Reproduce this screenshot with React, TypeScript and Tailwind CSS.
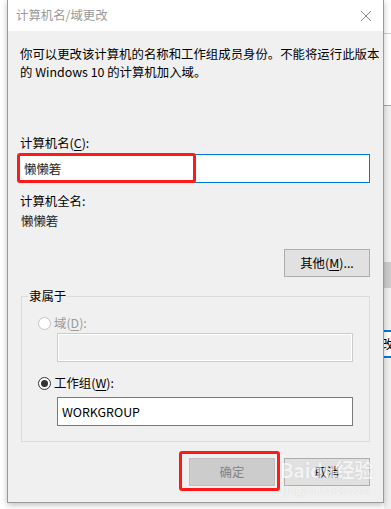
import React from "react";

const font = { fontFamily: '"Noto Sans CJK SC", "Noto Sans", sans-serif' };

function U({ children }: { children: React.ReactNode }) {
  return <span className="underline underline-offset-2 decoration-1">{children}</span>;
}

function Radio({ checked, disabled }: { checked?: boolean; disabled?: boolean }) {
  return (
    <span
      className={
        "flex items-center justify-center w-[13px] h-[13px] rounded-full border bg-white " +
        (disabled ? "border-[#c4c4c4]" : "border-[#333333]")
      }
    >
      {checked && <span className="w-[7px] h-[7px] rounded-full bg-[#333333]" />}
    </span>
  );
}

function Button({
  children,
  disabled,
  className = "",
}: {
  children: React.ReactNode;
  disabled?: boolean;
  className?: string;
}) {
  return (
    <div
      className={
        "flex items-center justify-center w-[86px] h-[28px] border text-[12.4px] " +
        (disabled
          ? "bg-[#cccccc] border-[#bfbfbf] text-[#838383]"
          : "bg-[#e1e1e1] border-[#adadad] text-black") +
        " " +
        className
      }
    >
      {children}
    </div>
  );
}

export default function App() {
  return (
    <div className="flex w-[391px] h-[509px] bg-white overflow-hidden" style={font}>
      <div className="w-[7px] shrink-0" />

      {/* dialog */}
      <div className="w-[377px] h-[503px] shrink-0 flex flex-col border-x border-b border-[#9a9a9a] bg-[#f0f0f0] shadow-[0_2px_6px_rgba(0,0,0,0.25)] relative">
        {/* title bar */}
        <div className="h-[31px] bg-white flex items-center justify-between pl-[8px] pr-[8px]">
          <span className="text-[12.4px] text-[#9a9a9a] leading-none">计算机名/域更改</span>
          <svg width="12" height="12" viewBox="0 0 12 12" className="mr-[3px]">
            <path d="M1 1 L11 11 M11 1 L1 11" stroke="#8a8a8a" strokeWidth="1" />
          </svg>
        </div>

        {/* body */}
        <div className="flex flex-col pl-[11px] pr-[13px] text-[12.4px] leading-[18px] text-black">
          <div className="mt-[14px] ml-[1px]">
            <div className="whitespace-nowrap">你可以更改该计算机的名称和工作组成员身份。不能将运行此版本</div>
            <div className="whitespace-nowrap">的 Windows 10 的计算机加入域。</div>
          </div>

          <div className="mt-[53px] ml-[1px]">
            计算机名(<U>C</U>):
          </div>
          <div className="relative mt-[2px] h-[29px] border border-[#0078d7] bg-white flex items-center pl-[4px]">
            <span className="text-[#222]">懒懒箬</span>
            <div className="absolute left-[-3px] top-[-2px] w-[179px] h-[30px] border-[3px] border-[#ff1a1a] rounded-[3px]" />
          </div>

          <div className="mt-[9px] ml-[1px]">计算机全名:</div>
          <div className="mt-[2px] ml-[2px] text-[#222]">懒懒箬</div>

          <div className="flex justify-end mt-[19px]">
            <Button>
              其他(<U>M</U>)...
            </Button>
          </div>

          {/* group box */}
          <div className="relative mt-[19px] ml-[2px] h-[146px] border border-[#dcdcdc] flex flex-col pt-[17px]">
            <span className="absolute top-[-10px] left-[6px] px-[1px] bg-[#f0f0f0]">隶属于</span>

            <div className="flex items-center gap-[3px] ml-[16px] text-[#9a9a9a]">
              <Radio disabled />
              <span>
                域(<U>D</U>):
              </span>
            </div>
            <div className="mt-[1px] ml-[35px] w-[296px] h-[29px] border border-[#cccccc] shadow-[inset_0_0_0_1px_#ffffff]" />

            <div className="flex items-center gap-[3px] ml-[16px] mt-[12px]">
              <Radio checked />
              <span>
                工作组(<U>W</U>):
              </span>
            </div>
            <div className="mt-[5px] ml-[35px] w-[296px] h-[29px] border border-[#7a7a7a] bg-white flex items-center pl-[4px]">
              WORKGROUP
            </div>
          </div>

          <div className="flex justify-end gap-[9px] mt-[16px]">
            <div className="relative">
              <Button disabled>确定</Button>
              <div className="absolute left-[-10px] top-[-7px] w-[101px] h-[40px] border-[3px] border-[#ff1a1a] rounded-[3px]" />
            </div>
            <Button>取消</Button>
          </div>
        </div>

        {/* watermark */}
        <div className="absolute left-[272px] top-[460px] flex flex-col items-center pointer-events-none opacity-60">
          <span
            className="text-[20px] font-bold leading-none text-white tracking-tight"
            style={{ textShadow: "0 0 1px #b0b0b0" }}
          >
            Baidu经验
          </span>
          <span
            className="text-[10px] leading-none mt-[5px] text-white"
            style={{ textShadow: "0 0 1px #b0b0b0" }}
          >
            jingyan.baidu.com
          </span>
        </div>
      </div>

      {/* window behind, right edge */}
      <div className="flex-1 flex flex-col bg-white text-[12.4px]">
        <div className="h-[33px]" />
        <div className="h-px bg-[#d0d0d0]" />
        <div className="h-[71px]" />
        <div className="h-px bg-[#a8a8a8]" />
        <div className="h-[156px] bg-[#f0f0f0]" />
        <div className="h-[26px] bg-[#cccccc]" />
        <div className="h-[42px] bg-[#f0f0f0]" />
        <div className="h-[2px] bg-[#0078d7]" />
        <div className="h-[24px] flex items-center -ml-[3px] bg-white overflow-hidden whitespace-nowrap">改(</div>
        <div className="h-[2px] bg-[#0078d7]" />
        <div className="flex-1 bg-[#f0f0f0]" />
      </div>
    </div>
  );
}
